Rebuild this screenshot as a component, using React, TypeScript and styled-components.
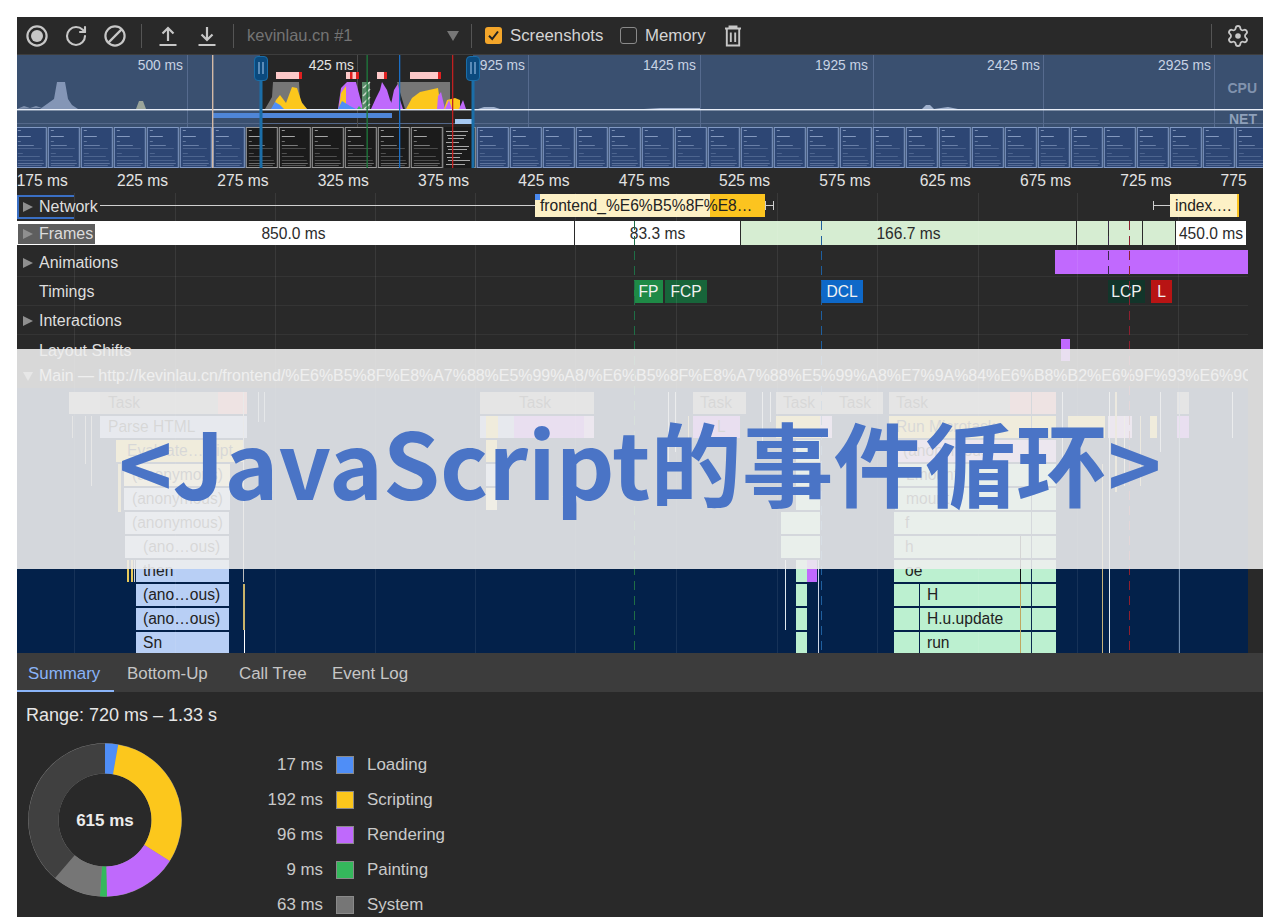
import React from "react";
import styled, { createGlobalStyle } from "styled-components";
import { RotateCw } from "lucide-react";

const UI_FONT = `"Liberation Sans", Arial, sans-serif`;
const PANEL = "#292929";
const SCALE_PX = 100.33;

const GlobalStyle = createGlobalStyle`
  html, body { margin: 0; padding: 0; background: #fff; overflow: hidden; }
  body { font-family: ${UI_FONT}; }
`;

/* --- page frame --- */
const Page = styled.div`
  position: relative;
  box-sizing: border-box;
  width: 1280px;
  height: 917px;
  padding: 17px 17px 0;
  overflow: hidden;
`;

const Window = styled.div`
  display: flex;
  flex-direction: column;
  height: 900px;
  background: ${PANEL};
  color: #e3e3e3;
`;

/* --- toolbar --- */
const Toolbar = styled.div`
  display: flex;
  align-items: center;
  flex: 0 0 37px;
  height: 37px;
  border-bottom: 1px solid #3d3d3d;
  color: #c7c7c7;
`;

const IconButton = styled.div`
  display: flex;
  align-items: center;
  justify-content: center;
  width: 39px;
  height: 100%;
`;

const Separator = styled.div<{ $before: number; $after: number }>`
  width: 1px;
  height: 24px;
  background: #555;
  margin: 0 ${(p) => p.$after}px 0 ${(p) => p.$before}px;
`;

const TargetSelect = styled.div`
  display: flex;
  align-items: center;
  justify-content: space-between;
  width: 213px;
  margin-left: -1px;
  font-size: 16.5px;
  color: #747474;
`;

const Caret = styled.span`
  width: 0;
  height: 0;
  margin-right: 1px;
  border-left: 6px solid transparent;
  border-right: 6px solid transparent;
  border-top: 10px solid #777;
`;

const CheckField = styled.label<{ $width: number }>`
  display: flex;
  align-items: center;
  gap: 8px;
  width: ${(p) => p.$width}px;
  font-size: 16.8px;
  color: #d4d4d4;
`;

const CheckBox = styled.span<{ $on?: boolean }>`
  display: flex;
  align-items: center;
  justify-content: center;
  box-sizing: border-box;
  width: 17px;
  height: 17px;
  border-radius: 3px;
  background: ${(p) => (p.$on ? "#f4a62a" : "transparent")};
  border: ${(p) => (p.$on ? "none" : "1.5px solid #8a8a8a")};
`;

const Spacer = styled.div`
  flex: 1;
`;

const EdgeGap = styled.div`
  flex: 0 0 6px;
`;

/* --- overview --- */
const OverviewSvg = styled.svg`
  display: block;
  flex: 0 0 113px;
  width: 1246px;
  height: 113px;
  font-family: ${UI_FONT};
`;

/* --- timeline --- */
const Timeline = styled.div`
  position: relative;
  flex: 0 0 485px;
  display: flex;
  flex-direction: column;
  overflow: hidden;
`;

const Ruler = styled.div`
  display: flex;
  flex: 0 0 25px;
  width: 1231px;
  overflow: hidden;
  font-size: 15.6px;
  line-height: 26px;
`;

const RulerTick = styled.div<{ $first?: boolean }>`
  flex: 0 0 ${SCALE_PX}px;
  box-sizing: border-box;
  text-align: right;
  white-space: nowrap;
  margin-left: ${(p) => (p.$first ? "-49.5px" : "0")};
`;

const GridLine = styled.div<{ $x: number }>`
  position: absolute;
  top: 25px;
  bottom: 0;
  left: ${(p) => p.$x - 17}px;
  width: 1px;
  background: rgba(255, 255, 255, 0.08);
  z-index: 1;
`;

const MarkerLine = styled.div<{ $x: number; $color: string; $top?: number; $height?: number }>`
  position: absolute;
  top: ${(p) => (p.$top ?? 221) - 168}px;
  height: ${(p) => (p.$height ? `${p.$height}px` : "auto")};
  bottom: ${(p) => (p.$height ? "auto" : "0")};
  left: ${(p) => p.$x - 17}px;
  width: 1px;
  background: repeating-linear-gradient(
    to bottom,
    ${(p) => p.$color} 0 9px,
    transparent 9px 15px
  );
  z-index: 4;
`;

const ScrollGutter = styled.div`
  position: absolute;
  top: 220px;
  right: 0;
  width: 15px;
  bottom: 0;
  background: ${PANEL};
  z-index: 5;
`;

const TrackRow = styled.div<{ $height: number; $line?: boolean }>`
  position: relative;
  flex: 0 0 ${(p) => p.$height}px;
  width: 1231px;
  box-sizing: border-box;
  border-bottom: ${(p) => (p.$line ? "1px solid #343434" : "none")};
  font-size: 16px;
`;

const TrackLabel = styled.div<{ $boxed?: "network" | "frames" }>`
  position: absolute;
  left: ${(p) => (p.$boxed === "frames" ? "1px" : "0")};
  top: calc(50% + ${(p) => (p.$boxed ? "0px" : "1px")});
  transform: translateY(-50%);
  z-index: 3;
  display: flex;
  align-items: center;
  box-sizing: border-box;
  padding-left: ${(p) => (p.$boxed === "frames" ? "5px" : "6px")};
  padding-right: ${(p) => (p.$boxed === "frames" ? "2px" : "0")};
  gap: 6px;
  height: ${(p) => (p.$boxed ? "20px" : "auto")};
  white-space: nowrap;
  color: ${(p) => (p.$boxed === "frames" ? "#dcdcdc" : "#dedede")};
  background: ${(p) => (p.$boxed === "frames" ? "#5e5e5e" : "transparent")};
  ${(p) =>
    p.$boxed === "network"
      ? `height: 24px; width: 57px; border: 2px solid #3a6fc4; border-right: none; background: ${PANEL}; overflow: visible; padding-left: 4px;`
      : ""}
`;

const Arrow = styled.span<{ $hidden?: boolean; $down?: boolean }>`
  flex: none;
  width: 0;
  height: 0;
  ${(p) =>
    p.$down
      ? `border-left: 5px solid transparent; border-right: 5px solid transparent; border-top: 9px solid #aaa;`
      : `border-top: 5.5px solid transparent; border-bottom: 5.5px solid transparent; border-left: 10px solid ${
          p.$hidden ? "transparent" : "#8f8f8f"
        };`}
`;

const RequestBox = styled.div<{ $x: number; $w: number }>`
  position: absolute;
  left: ${(p) => p.$x - 17}px;
  width: ${(p) => p.$w}px;
  top: 1px;
  height: 23px;
  box-sizing: border-box;
  padding-left: 5px;
  overflow: hidden;
  background: #fdf1c6;
  color: #222;
  font-size: 15.6px;
  line-height: 24px;
  white-space: nowrap;
`;

const RequestFill = styled.div<{ $x: number; $w: number }>`
  position: absolute;
  left: ${(p) => p.$x - 17}px;
  width: ${(p) => p.$w}px;
  top: 1px;
  height: 23px;
  background: #fcc41f;
`;

const RequestLabel = styled.span`
  position: absolute;
  left: 523px;
  top: 1px;
  font-size: 15.6px;
  line-height: 24px;
  color: #222;
  white-space: nowrap;
`;

const Whisker = styled.div<{ $x: number; $w: number }>`
  position: absolute;
  left: ${(p) => p.$x - 17}px;
  width: ${(p) => p.$w}px;
  top: 12px;
  height: 1.2px;
  background: #cfcfcf;
`;

const WhiskerCap = styled.div<{ $x: number }>`
  position: absolute;
  left: ${(p) => p.$x - 17}px;
  top: 8px;
  height: 9px;
  width: 1.2px;
  background: #cfcfcf;
`;

const RequestDot = styled.div`
  position: absolute;
  left: 518px;
  top: 1px;
  width: 5px;
  height: 6px;
  background: #4a8af0;
`;

const FrameCell = styled.div<{ $x: number; $w: number; $green?: boolean; $shift?: number }>`
  position: absolute;
  left: ${(p) => p.$x - 17}px;
  width: ${(p) => p.$w}px;
  top: 1px;
  height: 24px;
  box-sizing: border-box;
  padding-right: ${(p) => p.$shift ?? 0}px;
  border-right: 1.5px solid #2a2a2a;
  background: ${(p) => (p.$green ? "#d6edd2" : "#fff")};
  color: #2b2b2b;
  font-size: 15.6px;
  line-height: 26px;
  text-align: center;
  white-space: nowrap;
`;

const AnimationBar = styled.div`
  position: absolute;
  left: 1038px;
  width: 193px;
  top: 2px;
  height: 24px;
  background: #c169fe;
`;

const TimingChip = styled.div<{ $x: number; $w: number; $color: string }>`
  position: absolute;
  left: ${(p) => p.$x - 17}px;
  width: ${(p) => p.$w}px;
  top: 3px;
  height: 23px;
  background: ${(p) => p.$color};
  color: #f2f2f2;
  font-size: 15.6px;
  line-height: 23px;
  text-align: center;
`;

const ShiftMark = styled.div`
  position: absolute;
  left: 1044px;
  width: 9px;
  top: 4px;
  height: 22px;
  background: #c169fe;
`;

const MainLabel = styled.div`
  position: absolute;
  left: 6px;
  top: 3px;
  width: 1225px;
  display: flex;
  align-items: center;
  gap: 6px;
  overflow: hidden;
  color: #f0f0f0;
  font-size: 15.95px;
  white-space: nowrap;
`;

const Flame = styled.div`
  position: relative;
  flex: 1;
  width: 1231px;
  background: #03214a;
  overflow: hidden;
`;

const FlameBar = styled.div<{ $x: number; $y: number; $w: number; $color: string; $indent?: number }>`
  position: absolute;
  left: ${(p) => p.$x - 17}px;
  top: ${(p) => p.$y - 388}px;
  width: ${(p) => p.$w}px;
  height: 22px;
  box-sizing: border-box;
  padding-left: ${(p) => p.$indent ?? 7}px;
  background: ${(p) => p.$color};
  color: #222;
  font-size: 15.6px;
  line-height: 22px;
  white-space: nowrap;
  overflow: hidden;
`;

const FlameTick = styled.div<{ $x: number; $y: number; $h: number; $color: string; $w?: number }>`
  position: absolute;
  left: ${(p) => p.$x - 17}px;
  top: ${(p) => p.$y - 388}px;
  width: ${(p) => p.$w ?? 1}px;
  height: ${(p) => p.$h}px;
  background: ${(p) => p.$color};
  z-index: 2;
`;

/* --- bottom panel --- */
const Tabs = styled.div`
  display: flex;
  flex: 0 0 39px;
  background: #3c3c3c;
`;

const Tab = styled.div<{ $active?: boolean; $w: number }>`
  box-sizing: border-box;
  flex: 0 0 ${(p) => p.$w}px;
  height: 39px;
  padding-left: ${(p) => (p.$active ? "11px" : "13px")};
  line-height: 41px;
  font-size: 16.9px;
  white-space: nowrap;
  color: ${(p) => (p.$active ? "#8ab4f8" : "#c6c6c6")};
  border-bottom: 2px solid ${(p) => (p.$active ? "#8ab4f8" : "transparent")};
`;

const Summary = styled.div`
  flex: 1;
  padding: 12px 0 0 9px;
  overflow: hidden;
`;

const RangeText = styled.div`
  font-size: 18px;
  line-height: 22px;
  color: #e6e6e6;
`;

const SummaryBody = styled.div`
  display: flex;
  margin-top: 17px;
  margin-left: 2px;
`;

const DonutSvg = styled.svg`
  flex: none;
  width: 154px;
  height: 154px;
  font-family: ${UI_FONT};
`;

const Legend = styled.div`
  display: grid;
  grid-template-columns: 65px 18px auto;
  grid-auto-rows: 35.2px;
  column-gap: 13px;
  align-items: center;
  margin: 4px 0 0 76px;
  font-size: 16.9px;
  color: #c9c9c9;
`;

const LegendValue = styled.div`
  text-align: right;
  white-space: nowrap;
`;

const LegendSwatch = styled.div<{ $color: string }>`
  box-sizing: border-box;
  width: 18px;
  height: 18px;
  background: ${(p) => p.$color};
  border: 1px solid #8a8a8a;
`;

/* --- title band laid over the screenshot --- */
const Band = styled.div`
  position: absolute;
  left: 17px;
  top: 349px;
  width: 1246px;
  height: 220px;
  display: flex;
  justify-content: center;
  background: rgba(238, 238, 238, 0.89);
  z-index: 10;
`;

const BandTitle = styled.div`
  margin-top: 61px;
  height: 100px;
  font-family: "Noto Sans CJK SC", "Noto Sans", sans-serif;
  font-weight: 700;
  font-size: 91.4px;
  line-height: 100px;
  color: #4a74c6;
  white-space: nowrap;
`;

/* --- data --- */
const OVERVIEW_LABELS = [
  { end: 183, text: "500 ms" },
  { end: 354, text: "425 ms" },
  { end: 525, text: "925 ms" },
  { end: 696, text: "1425 ms" },
  { end: 868, text: "1925 ms" },
  { end: 1040, text: "2425 ms" },
  { end: 1211, text: "2925 ms" },
];
const OVERVIEW_GRID = [187, 357, 528, 700, 873, 1043, 1214];
const RULER = [175, 225, 275, 325, 375, 425, 475, 525, 575, 625, 675, 725, 775];
const TIME_GRID = [74, 175, 275, 375, 475, 575, 676, 777, 877, 978, 1077, 1178];
const LONG_TASKS = [
  [276, 26],
  [346, 13],
  [377, 10],
  [410, 31],
];

const thumbs = Array.from({ length: 38 }, (_, i) => 14.8 + 33 * i);
const THUMB_LINES = [
  [3, 3, 3, 0.7],
  [3, 9, 13, 0.8],
  [3, 14, 3, 0.5],
  [3, 18, 16, 0.55],
  [3, 21, 24, 0.28],
  [3, 26, 5, 0.3],
  [3, 29, 22, 0.3],
  [3, 33, 25, 0.28],
  [3, 36, 26, 0.45],
  [3, 38, 24, 0.35],
];

const TASK = "#9a9a9a";
const TASK_IDLE = "#a8a8a8";
const BLUE = "#b8cff5";
const PALE_BLUE = "#c8d8f5";
const YELLOW = "#f8d84a";
const PALE_YELLOW = "#fae8a0";
const PURPLE = "#c169fe";
const PALE_PURPLE = "#d8a8f5";
const GREEN = "#bcf0d0";

const FLAME_BARS: [number, number, number, string, string?, number?][] = [
  [69, 392, 31, TASK_IDLE],
  [100, 392, 147, TASK, "Task", 8],
  [218, 392, 29, "#e88a8a"],
  [100, 416, 147, "#a8c0ee", "Parse HTML", 8],
  [116, 440, 128, YELLOW, "Evaluate…cript", 11],
  [124, 464, 106, PALE_YELLOW, "(anonymous)", 8],
  [124, 488, 106, PALE_BLUE, "(anonymous)", 8],
  [125, 512, 104, PALE_BLUE, "(anonymous)", 7],
  [125, 536, 104, PALE_BLUE, "(ano…ous)", 18],
  [136, 560, 93, BLUE, "then", 7],
  [136, 584, 93, BLUE, "(ano…ous)", 7],
  [136, 608, 93, BLUE, "(ano…ous)", 7],
  [136, 632, 93, BLUE, "Sn", 7],
  [480, 392, 114, TASK, "Task", 39],
  [480, 416, 6, "#a8c0ee"],
  [486, 416, 12, YELLOW],
  [498, 416, 16, "#a8c0ee"],
  [514, 416, 70, PURPLE],
  [584, 416, 10, PALE_PURPLE],
  [486, 440, 11, YELLOW],
  [486, 464, 11, PALE_BLUE],
  [486, 488, 11, PALE_YELLOW],
  [693, 392, 53, TASK, "Task", 7],
  [693, 416, 47, PURPLE, "L", 24],
  [776, 392, 56, TASK, "Task", 7],
  [832, 392, 51, TASK, "Task", 7],
  [776, 416, 44, YELLOW],
  [820, 416, 12, PALE_PURPLE],
  [796, 440, 24, GREEN],
  [796, 464, 24, GREEN],
  [796, 488, 24, GREEN],
  [781, 512, 39, GREEN],
  [781, 536, 39, GREEN],
  [796, 560, 11, GREEN],
  [807, 560, 10, PURPLE],
  [796, 584, 11, GREEN],
  [796, 608, 11, GREEN],
  [796, 632, 11, GREEN],
  [889, 392, 167, TASK, "Task", 7],
  [1010, 392, 46, "#e88a8a"],
  [889, 416, 167, YELLOW, "Run Microtasks", 7],
  [895, 440, 161, PALE_PURPLE, "(anonymous)", 8],
  [895, 464, 161, GREEN, "Lmount", 11],
  [895, 488, 161, GREEN, "mount", 11],
  [894, 512, 162, GREEN, "f", 11],
  [894, 536, 162, GREEN, "h", 11],
  [894, 560, 162, GREEN, "oe", 11],
  [894, 584, 25, GREEN],
  [894, 608, 25, GREEN],
  [894, 632, 25, GREEN],
  [920, 584, 136, GREEN, "H", 7],
  [920, 608, 136, GREEN, "H.u.update", 7],
  [920, 632, 136, GREEN, "run", 7],
  [1068, 416, 37, YELLOW],
  [1108, 416, 24, PALE_PURPLE],
  [1150, 416, 6, YELLOW],
  [1177, 392, 12, TASK],
  [1177, 416, 12, PURPLE],
];

const FLAME_TICKS: [number, number, number, string, number?][] = [
  [127, 560, 22, "#e8c95a", 2],
  [131, 560, 22, "#e8c95a", 2],
  [134, 560, 22, "#cfcfcf", 1],
  [243, 584, 46, "#c9b36a", 2],
  [244, 630, 23, "#ffffff", 1],
  [243, 392, 190, "#bdbdbd", 1],
  [72, 416, 22, "#9a9a9a", 1],
  [85, 416, 48, "#b0b0b0", 1],
  [91, 416, 70, "#b0b0b0", 1],
  [118, 464, 48, "#e0c95a", 3],
  [258, 392, 30, "#9aa8bd", 1],
  [264, 392, 30, "#9aa8bd", 1],
  [785, 560, 70, "#dfe8ee", 1],
  [818, 560, 93, "#cfd8e8", 1],
  [1020, 536, 117, "#111", 1],
  [1031, 392, 261, "#0b2a4f", 1],
  [1020, 584, 69, "#c0a860", 1],
  [919, 584, 69, "#03214a", 1],
  [1102, 464, 189, "#c9b47a", 1],
  [1109, 392, 261, "#dfe8ee", 1],
  [1179, 392, 261, "#6f8db0", 1],
  [1062, 392, 70, "#cfd6df", 1],
  [1115, 392, 100, "#d8c070", 2],
  [1124, 416, 70, "#e8e0c0", 1],
  [1140, 416, 70, "#d8c070", 1],
  [1160, 392, 60, "#cfd6df", 1],
  [1232, 392, 46, "#cfd6df", 1],
  [675, 392, 60, "#cfd6df", 1],
  [668, 392, 70, "#cfd6df", 1],
  [688, 416, 60, "#d8c070", 1],
  [762, 392, 50, "#cfd6df", 1],
  [770, 392, 30, "#cfd6df", 1],
];
const ROW_SEPARATORS = [582, 606, 630];

const COLORS = {
  loading: "#4f8ef7",
  scripting: "#fcc71c",
  rendering: "#bf69fc",
  painting: "#35b85c",
  system: "#767676",
  idle: "#404040",
};

const LEGEND = [
  { value: 17, label: "Loading", color: COLORS.loading },
  { value: 192, label: "Scripting", color: COLORS.scripting },
  { value: 96, label: "Rendering", color: COLORS.rendering },
  { value: 9, label: "Painting", color: COLORS.painting },
  { value: 63, label: "System", color: COLORS.system },
];

/* --- icons --- */
const RecordIcon = () => (
  <svg width="24" height="24" viewBox="0 0 24 24">
    <circle cx="12" cy="12" r="9.6" fill="none" stroke="#c7c7c7" strokeWidth="2.2" />
    <circle cx="12" cy="12" r="6" fill="#c7c7c7" />
  </svg>
);

const ClearIcon = () => (
  <svg width="24" height="24" viewBox="0 0 24 24" fill="none" stroke="#c7c7c7" strokeWidth="2.2">
    <circle cx="12" cy="12" r="9.6" />
    <path d="M5.4 18.6 18.6 5.4" />
  </svg>
);

const UploadIcon = () => (
  <svg width="22" height="24" viewBox="0 0 22 24" fill="none" stroke="#c7c7c7" strokeWidth="2.2">
    <path d="M11 17V4M5.5 9.5 11 4l5.5 5.5M2.5 21h17" />
  </svg>
);

const DownloadIcon = () => (
  <svg width="22" height="24" viewBox="0 0 22 24" fill="none" stroke="#c7c7c7" strokeWidth="2.2">
    <path d="M11 3v13M5.5 10.5 11 16l5.5-5.5M2.5 21h17" />
  </svg>
);

const TrashIcon = () => (
  <svg width="18" height="22" viewBox="0 0 18 22" fill="none" stroke="#c7c7c7" strokeWidth="1.9">
    <path d="M1 3.5h16M5.5 3.5V1.5h7v2M2.8 3.5v17h12.4v-17M6.8 7.5v9.5M11.2 7.5v9.5" />
  </svg>
);

const GearIcon = () => (
  <svg width="24" height="24" viewBox="0 0 24 24" fill="none" stroke="#c7c7c7" strokeWidth="1.8">
    <path d="M9.671 4.136a2.34 2.34 0 0 1 4.659 0 2.34 2.34 0 0 0 3.319 1.915 2.34 2.34 0 0 1 2.33 4.033 2.34 2.34 0 0 0 0 3.831 2.34 2.34 0 0 1-2.33 4.033 2.34 2.34 0 0 0-3.319 1.915 2.34 2.34 0 0 1-4.659 0 2.34 2.34 0 0 0-3.32-1.915 2.34 2.34 0 0 1-2.33-4.033 2.34 2.34 0 0 0 0-3.831A2.34 2.34 0 0 1 6.35 6.051a2.34 2.34 0 0 0 3.319-1.915" />
    <circle cx="12" cy="12" r="2.8" fill="#c7c7c7" stroke="none" />
  </svg>
);

const CheckMark = () => (
  <svg width="13" height="13" viewBox="0 0 13 13" fill="none" stroke="#222" strokeWidth="2">
    <path d="M2 6.8 5.2 10 11 2.5" />
  </svg>
);

/* --- overview drawing --- */
const Thumb = ({ x, dim }: { x: number; dim: boolean }) => (
  <g>
    <rect
      x={x + 0.5}
      y={127.5}
      width={31}
      height={40}
      fill={dim ? "#2d4674" : "#1b1b1b"}
      stroke={dim ? "#8199c4" : "#9a9a9a"}
      strokeWidth="1"
    />
    {THUMB_LINES.map(([dx, dy, w, o]) => (
      <rect
        key={dy}
        x={x + dx}
        y={127 + dy}
        width={w}
        height={0.9}
        fill={dim ? "#a8bbdc" : "#e0e0e0"}
        opacity={o}
      />
    ))}
  </g>
);

const Handle = ({ x }: { x: number }) => (
  <g>
    <rect x={x - 1.5} y={60} width={3} height={108} fill="#1b6ea8" />
    <rect x={x - 6.5} y={56.5} width={13} height={24} rx={3.5} fill="#0b4a7e" stroke="#1b6ea8" />
    <path d={`M${x - 2} 62v12M${x + 2} 62v12`} stroke="#8fb8df" strokeWidth="1.2" />
  </g>
);

const Overview = () => (
  <OverviewSvg viewBox="17 55 1246 113">
    <rect x="17" y="55" width="1246" height="113" fill="#3a5070" />
    <rect x="260" y="55" width="213" height="113" fill="#262626" />
    <rect x="17" y="123" width="1246" height="1" fill="#54688a" />
    {OVERVIEW_GRID.map((x) => (
      <rect key={x} x={x} y={55} width={1} height={72} fill={x === 357 ? "#4a4a4a" : "#566b8e"} />
    ))}
    {OVERVIEW_LABELS.map((l) => (
      <text key={l.text} x={l.end} y={70} textAnchor="end" fontSize="13.8" fill={l.end === 354 ? "#e4e4e4" : "#c8d3e4"}>
        {l.text}
      </text>
    ))}
    <text x="1257" y="93" textAnchor="end" fontSize="14" fontWeight="700" fill="#8193ae">CPU</text>
    <text x="1257" y="124" textAnchor="end" fontSize="14" fontWeight="700" fill="#8ea0ba">NET</text>

    {/* activity before the selection */}
    <path d="M40 109 47 104 54 99 57 82H65L68 99 72 105 78 109Z" fill="#8496b6" />
    <path d="M136 109 139 101H143L146 109Z" fill="#9aa49a" />
    <path d="M17 109 24 106 30 108 36 106 42 108Z" fill="#7f90ad" />
    <path d="M478 109 484 107 494 107 500 109ZM644 109 660 108 700 108 700 109ZM922 109 926 105 930 105 934 109 948 107 958 109Z" fill="#9fb0cc" />

    {/* main thread activity inside the selection */}
    <path d="M265 109 272 97 273 82H299L300 100 307 109Z" fill="#767676" />
    <path d="M272 109 276 100 280 95 286 103 292 87 297 88 302 103 307 109Z" fill="#fcc71c" />
    <path d="M271 109 275 102 280 105 284 109Z" fill="#4f8ef7" />
    <path d="M338 109 341 88 347 82H356L363 109Z" fill="#bf69fc" />
    <path d="M339 109 341 93 346 86 346 105 345 109Z" fill="#fcc71c" />
    <path d="M338 109 342 101 350 106 356 109Z" fill="#4f8ef7" />
    <path d="M357 109 359 106 362 109Z" fill="#35b85c" />
    <path d="M362 82 370 82 370 109 362 109Z" fill="#5a8a6a" />
    <path d="M363 88 370 82M363 96 370 89M363 104 370 97M364 109 370 104" stroke="#c9d8c9" strokeWidth="1.5" />
    <path d="M371 109 376 98 380 90 382 82 387 90 390 100 395 109Z" fill="#bf69fc" />
    <path d="M390 109 394 90 399 82 400 100 403 109Z" fill="#bf69fc" />
    <path d="M397 82H450V105L447 109H405Z" fill="#767676" />
    <path d="M406 109 412 98 420 92 438 88 441 109Z" fill="#fcc71c" />
    <path d="M437 109 438 96 441 92 445 109Z" fill="#bf69fc" />
    <path d="M444 109 447 100 455 98 460 100 460 109Z" fill="#fcc71c" />
    <path d="M459 109 463 100 466 109Z" fill="#bf69fc" />
    <path d="M449 100 452 109 445 109Z" fill="#bf69fc" />

    {LONG_TASKS.map(([x, w]) => (
      <g key={x}>
        <rect x={x} y={72} width={w} height={7} fill="#fdc9c9" />
        <rect x={x + w - 3} y={72} width={3} height={7} fill="#e02020" />
      </g>
    ))}
    <rect x="350" y="72" width="2.5" height="7" fill="#e02020" />

    <rect x="17" y="109" width="1246" height="1.4" fill="#e8eef8" />
    <rect x="213" y="113" width="179" height="5" fill="#4f86d8" />
    <rect x="455" y="119" width="17" height="5" fill="#a5c8f2" />

    {thumbs.map((x) => (
      <Thumb key={x} x={x} dim={x < 244 || x > 470} />
    ))}
    <rect x="444" y="127" width="30" height="41" fill="#1b1b1b" />
    {[131, 135, 138, 142, 146, 149, 153, 157, 160, 164].map((y, i) => (
      <rect key={y} x={446 + (i % 3)} y={y} width={22 - (i % 4) * 3} height={1} fill="#a8a8a8" />
    ))}

    <rect x="212" y="55" width="1.4" height="113" fill="#d3b9a6" />
    <rect x="366.5" y="55" width="1.3" height="113" fill="#1f7a3c" />
    <rect x="399" y="55" width="1.3" height="113" fill="#1b6ec4" />
    <rect x="452" y="55" width="1.3" height="113" fill="#c02020" />
    <Handle x={261} />
    <Handle x={473} />
  </OverviewSvg>
);

/* --- donut --- */
const polar = (cx: number, cy: number, r: number, angle: number) => [
  cx + r * Math.sin(angle),
  cy - r * Math.cos(angle),
];

const arcPath = (from: number, to: number) => {
  const [R, r, c] = [76.5, 46.5, 77];
  const [x1, y1] = polar(c, c, R, from);
  const [x2, y2] = polar(c, c, R, to);
  const [x3, y3] = polar(c, c, r, to);
  const [x4, y4] = polar(c, c, r, from);
  const large = to - from > Math.PI ? 1 : 0;
  return `M${x1} ${y1}A${R} ${R} 0 ${large} 1 ${x2} ${y2}L${x3} ${y3}A${r} ${r} 0 ${large} 0 ${x4} ${y4}Z`;
};

const Donut = () => {
  const total = 615;
  const used = LEGEND.reduce((sum, s) => sum + s.value, 0);
  const parts = [...LEGEND, { value: total - used, label: "Idle", color: COLORS.idle }];
  let at = 0;
  return (
    <DonutSvg viewBox="0 0 154 154">
      <circle cx="77" cy="77" r="76.8" fill="#8a8a8a" />
      <circle cx="77" cy="77" r="46.5" fill={PANEL} />
      {parts.map((s) => {
        const from = at;
        at += (s.value / total) * Math.PI * 2;
        return <path key={s.label} d={arcPath(from, at)} fill={s.color} />;
      })}
      <text x="77" y="83" textAnchor="middle" fontSize="17" fontWeight="700" fill="#ececec">
        615 ms
      </text>
    </DonutSvg>
  );
};

/* --- page --- */
const App: React.FC = () => {
  return (
    <Page>
      <GlobalStyle />
      <Window>
        <Toolbar>
          <IconButton><RecordIcon /></IconButton>
          <IconButton><RotateCw size={24} strokeWidth={2.1} /></IconButton>
          <IconButton><ClearIcon /></IconButton>
          <Separator $before={7} $after={6} />
          <IconButton><UploadIcon /></IconButton>
          <IconButton><DownloadIcon /></IconButton>
          <Separator $before={7} $after={14} />
          <TargetSelect>
            kevinlau.cn #1
            <Caret />
          </TargetSelect>
          <Separator $before={11} $after={13} />
          <CheckField $width={135}>
            <CheckBox $on><CheckMark /></CheckBox>
            Screenshots
          </CheckField>
          <CheckField $width={104}>
            <CheckBox />
            Memory
          </CheckField>
          <TrashIcon />
          <Spacer />
          <Separator $before={0} $after={6} />
          <IconButton><GearIcon /></IconButton>
          <EdgeGap />
        </Toolbar>

        <Overview />

        <Timeline>
          <Ruler>
            {RULER.map((t, i) => (
              <RulerTick key={t} $first={i === 0}>{t} ms</RulerTick>
            ))}
          </Ruler>
          {TIME_GRID.map((x) => (
            <GridLine key={x} $x={x} />
          ))}

          <TrackRow $height={27}>
            <TrackLabel $boxed="network">
              <Arrow />
              Network
            </TrackLabel>
            <Whisker $x={100} $w={435} />
            <RequestBox $x={535} $w={230} />
            <RequestFill $x={710} $w={55} />
            <RequestLabel>frontend_%E6%B5%8F%E8…</RequestLabel>
            <RequestDot />
            <WhiskerCap $x={765} />
            <Whisker $x={765} $w={9} />
            <WhiskerCap $x={773} />
            <WhiskerCap $x={1153} />
            <Whisker $x={1153} $w={17} />
            <RequestBox $x={1170} $w={67}>index.…</RequestBox>
            <RequestFill $x={1237} $w={2} />
          </TrackRow>

          <TrackRow $height={28}>
            <TrackLabel $boxed="frames">
              <Arrow />
              Frames
            </TrackLabel>
            <FrameCell $x={17} $w={558} $shift={4}>850.0 ms</FrameCell>
            <FrameCell $x={575} $w={166}>83.3 ms</FrameCell>
            <FrameCell $x={741} $w={336} $green>166.7 ms</FrameCell>
            <FrameCell $x={1077} $w={32} $green />
            <FrameCell $x={1109} $w={34} $green />
            <FrameCell $x={1143} $w={33} $green />
            <FrameCell $x={1176} $w={71}>450.0 ms</FrameCell>
          </TrackRow>

          <TrackRow $height={29} $line>
            <TrackLabel><Arrow />Animations</TrackLabel>
            <AnimationBar />
          </TrackRow>

          <TrackRow $height={29} $line>
            <TrackLabel><Arrow $hidden />Timings</TrackLabel>
            <TimingChip $x={634} $w={29} $color="#1e8a46">FP</TimingChip>
            <TimingChip $x={665} $w={42} $color="#17653a">FCP</TimingChip>
            <TimingChip $x={821} $w={42} $color="#0e68c8">DCL</TimingChip>
            <TimingChip $x={1108} $w={37} $color="#12352a">LCP</TimingChip>
            <TimingChip $x={1151} $w={21} $color="#b81414">L</TimingChip>
          </TrackRow>

          <TrackRow $height={29} $line>
            <TrackLabel><Arrow />Interactions</TrackLabel>
          </TrackRow>

          <TrackRow $height={29}>
            <TrackLabel><Arrow $hidden />Layout Shifts</TrackLabel>
            <ShiftMark />
          </TrackRow>

          <TrackRow $height={24}>
            <MainLabel>
              <Arrow $down />
              Main — http://kevinlau.cn/frontend/%E6%B5%8F%E8%A7%88%E5%99%A8/%E6%B5%8F%E8%A7%88%E5%99%A8%E7%9A%84%E6%B8%B2%E6%9F%93%E6%9C%BA%E5%88%B6
            </MainLabel>
          </TrackRow>

          <Flame>
            {FLAME_BARS.map(([x, y, w, color, text, indent]) => (
              <FlameBar key={`${x}-${y}`} $x={x} $y={y} $w={w} $color={color} $indent={indent}>
                {text}
              </FlameBar>
            ))}
            {ROW_SEPARATORS.map((y) => (
              <FlameTick key={y} $x={894} $y={y} $h={2} $w={162} $color="#03214a" />
            ))}
            {FLAME_TICKS.map(([x, y, h, color, w], i) => (
              <FlameTick key={i} $x={x} $y={y} $h={h} $color={color} $w={w} />
            ))}
          </Flame>

          <MarkerLine $x={634} $color="#1f6e46" />
          <MarkerLine $x={821} $color="#1f5f9e" />
          <MarkerLine $x={1129} $color="#8e2030" />
          <MarkerLine $x={1108} $color="#3a2a4a" $height={60} />
          <ScrollGutter />
        </Timeline>

        <Tabs>
          <Tab $active $w={97}>Summary</Tab>
          <Tab $w={112}>Bottom-Up</Tab>
          <Tab $w={93}>Call Tree</Tab>
          <Tab $w={100}>Event Log</Tab>
        </Tabs>

        <Summary>
          <RangeText>Range: 720 ms – 1.33 s</RangeText>
          <SummaryBody>
            <Donut />
            <Legend>
              {LEGEND.map((s) => (
                <React.Fragment key={s.label}>
                  <LegendValue>{s.value} ms</LegendValue>
                  <LegendSwatch $color={s.color} />
                  <div>{s.label}</div>
                </React.Fragment>
              ))}
            </Legend>
          </SummaryBody>
        </Summary>
      </Window>

      <Band>
        <BandTitle>{"<JavaScript的事件循环>"}</BandTitle>
      </Band>
    </Page>
  );
};

export default App;
